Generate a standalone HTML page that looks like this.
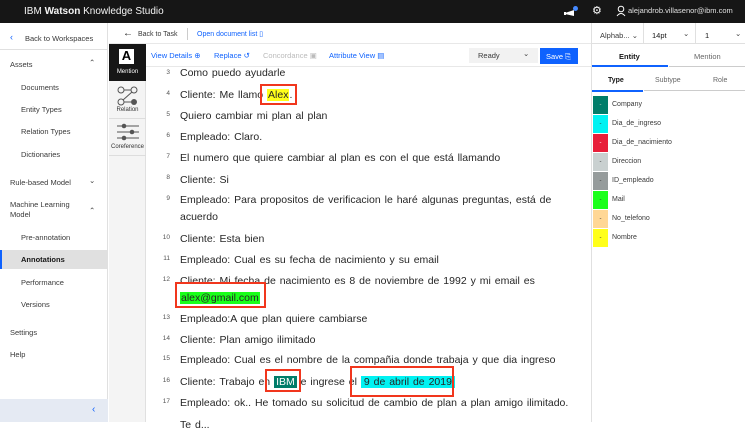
<!DOCTYPE html>
<html><head><meta charset="utf-8"><style>
*{margin:0;padding:0;box-sizing:border-box}
body{width:745px;height:422px;overflow:hidden;position:relative;background:#fff;font-family:"Liberation Sans",sans-serif;color:#161616}
.a{position:absolute;white-space:nowrap}
.top{left:0;top:0;width:745px;height:23px;background:#161616}
.side{left:0;top:23px;width:108px;height:399px;background:#fff;border-right:1px solid #e0e0e0}
.s{font-size:7.5px;color:#393939}
.ln{font-size:6.5px;color:#555;width:14px;text-align:right}
.tx{font-size:10.5px;color:#262626;letter-spacing:0;word-spacing:1px}
.box{border:2px solid #f1361d}
.ent{left:593px;width:15px;height:18px;color:#333;font-size:6px;text-align:center;line-height:18px}
.en{left:612px;font-size:7px;color:#393939}
.lk{font-size:7.5px;color:#0f62fe}
</style></head><body>
<div class="a top"></div>
<div class="a" style="left:24px;top:6px;color:#f4f4f4;font-size:10px">IBM <b>Watson</b> Knowledge Studio</div>
<svg class="a" style="left:563px;top:5px" width="16" height="14"><path d="M2 8 L11 5 L11 11 L2 9Z" fill="#fff"/><rect x="1" y="7" width="2" height="3" fill="#fff"/><circle cx="12.5" cy="3.5" r="2.5" fill="#4589ff"/></svg>
<div class="a" style="left:592px;top:4px;color:#fff;font-size:11px">⚙</div>
<svg class="a" style="left:616px;top:5px" width="10" height="12"><circle cx="5" cy="4" r="2.8" fill="none" stroke="#fff"/><path d="M1 11 Q5 6 9 11" fill="none" stroke="#fff"/></svg>
<div class="a" style="left:628px;top:6px;color:#e0e0e0;font-size:7.5px">alejandrob.villasenor@ibm.com</div>

<div class="a side"></div>
<div class="a" style="left:0;top:23px;width:108px;height:27px;border-bottom:1px solid #e0e0e0"></div>
<div class="a" style="left:10px;top:32px;color:#0f62fe;font-size:9px">‹</div>
<div class="a s" style="left:25px;top:34px">Back to Workspaces</div>
<div class="a s" style="left:10px;top:60px">Assets</div>
<div class="a s" style="left:89px;top:58px">⌃</div>
<div class="a s" style="left:21px;top:83px">Documents</div>
<div class="a s" style="left:21px;top:105px">Entity Types</div>
<div class="a s" style="left:21px;top:127px">Relation Types</div>
<div class="a s" style="left:21px;top:150px">Dictionaries</div>
<div class="a s" style="left:10px;top:178px">Rule-based Model</div>
<div class="a s" style="left:89px;top:176px">⌄</div>
<div class="a s" style="left:10px;top:200px;line-height:10px;white-space:normal;width:70px">Machine Learning Model</div>
<div class="a s" style="left:89px;top:206px">⌃</div>
<div class="a s" style="left:21px;top:233px">Pre-annotation</div>
<div class="a" style="left:0;top:250px;width:108px;height:19px;background:#e0e0e0;border-left:2px solid #0f62fe"></div>
<div class="a s" style="left:21px;top:255px;font-weight:bold;color:#161616">Annotations</div>
<div class="a s" style="left:21px;top:278px">Performance</div>
<div class="a s" style="left:21px;top:300px">Versions</div>
<div class="a s" style="left:10px;top:328px">Settings</div>
<div class="a s" style="left:10px;top:350px">Help</div>
<div class="a" style="left:0;top:399px;width:108px;height:23px;background:#e5eaf3"></div>
<div class="a" style="left:92px;top:404px;color:#0f62fe;font-size:10px">‹</div>

<div class="a" style="left:109px;top:43px;width:482px;height:1px;background:#e8e8e8"></div>
<div class="a" style="left:123px;top:28px;font-size:10px">←</div>
<div class="a s" style="left:138px;top:31px;font-size:7px">Back to Task</div>
<div class="a" style="left:187px;top:28px;width:1px;height:12px;background:#ccc"></div>
<div class="a lk" style="left:197px;top:30px;font-size:7px">Open document list ▯</div>

<div class="a" style="left:109px;top:44px;width:37px;height:378px;background:#f4f4f4;border-right:1px solid #e0e0e0"></div>
<div class="a" style="left:109px;top:44px;width:37px;height:37px;background:#161616"></div>
<div class="a" style="left:119px;top:49px;width:15px;height:15px;background:#fff;color:#000;font-weight:bold;font-size:13px;text-align:center;line-height:14px">A</div>
<div class="a" style="left:109px;top:69px;width:37px;text-align:center;color:#fff;font-size:6px">Mention</div>
<svg class="a" style="left:117px;top:86px" width="22" height="20"><circle cx="4" cy="4" r="3" fill="none" stroke="#555"/><circle cx="17" cy="4" r="3" fill="none" stroke="#555"/><circle cx="4" cy="16" r="3" fill="none" stroke="#555"/><circle cx="17" cy="16" r="3" fill="#555"/><path d="M7 4H14M15 6L6 14M7 16H14" stroke="#555"/></svg>
<div class="a" style="left:109px;top:107px;width:37px;text-align:center;color:#333;font-size:6px">Relation</div>
<div class="a" style="left:109px;top:118px;width:37px;height:1px;background:#ddd"></div>
<svg class="a" style="left:116px;top:123px" width="24" height="18"><path d="M1 3H23M1 9H23M1 15H23" stroke="#555"/><circle cx="8" cy="3" r="2.3" fill="#555"/><circle cx="16" cy="9" r="2.3" fill="#555"/><circle cx="8" cy="15" r="2.3" fill="#555"/></svg>
<div class="a" style="left:109px;top:144px;width:37px;text-align:center;color:#333;font-size:6px">Coreference</div>
<div class="a" style="left:109px;top:155px;width:37px;height:1px;background:#ddd"></div>

<div class="a lk" style="left:151px;top:51px">View Details ⊕</div>
<div class="a lk" style="left:214px;top:51px">Replace ↺</div>
<div class="a" style="left:263px;top:51px;font-size:7.5px;color:#bbb">Concordance ▣</div>
<div class="a lk" style="left:329px;top:51px">Attribute View ▤</div>
<div class="a" style="left:469px;top:48px;width:69px;height:15px;background:#f2f2f2"></div>
<div class="a s" style="left:478px;top:51px">Ready</div>
<div class="a s" style="left:523px;top:49px">⌄</div>
<div class="a" style="left:540px;top:48px;width:38px;height:16px;background:#0f62fe;color:#fff;font-size:7.5px;padding:4px 0 0 6px">Save ⎘</div>
<div class="a" style="left:146px;top:66px;width:445px;height:1px;background:#e8e8e8"></div>

<div class="a ln" style="left:156px;top:69px">3</div><div class="a tx" style="left:180px;top:67px">Como puedo ayudarle</div>
<div class="a ln" style="left:156px;top:90px">4</div><div class="a tx" style="left:180px;top:89px">Cliente: Me llamo <span style="background:#ffff1a;padding:0 1px">Alex</span>.</div>
<div class="a box" style="left:260px;top:84px;width:37px;height:21px"></div>
<div class="a ln" style="left:156px;top:111px">5</div><div class="a tx" style="left:180px;top:110px">Quiero cambiar mi plan al plan</div>
<div class="a ln" style="left:156px;top:132px">6</div><div class="a tx" style="left:180px;top:131px">Empleado: Claro.</div>
<div class="a ln" style="left:156px;top:153px">7</div><div class="a tx" style="left:180px;top:152px">El numero que quiere cambiar al plan es con el que está llamando</div>
<div class="a ln" style="left:156px;top:174px">8</div><div class="a tx" style="left:180px;top:174px">Cliente: Si</div>
<div class="a ln" style="left:156px;top:195px">9</div><div class="a tx" style="left:180px;top:194px">Empleado: Para propositos de verificacion le haré algunas preguntas, está de</div>
<div class="a tx" style="left:180px;top:211px">acuerdo</div>
<div class="a ln" style="left:156px;top:234px">10</div><div class="a tx" style="left:180px;top:233px">Cliente: Esta bien</div>
<div class="a ln" style="left:156px;top:255px">11</div><div class="a tx" style="left:180px;top:254px">Empleado: Cual es su fecha de nacimiento y su email</div>
<div class="a ln" style="left:156px;top:276px">12</div><div class="a tx" style="left:180px;top:275px">Cliente: Mi fecha de nacimiento es 8 de noviembre de 1992 y mi email es</div>
<div class="a tx" style="left:180px;top:292px"><span style="background:#1aff1a;padding:0 1px">alex@gmail.com</span></div>
<div class="a box" style="left:175px;top:282px;width:91px;height:26px"></div>
<div class="a ln" style="left:156px;top:314px">13</div><div class="a tx" style="left:180px;top:313px">Empleado:A que plan quiere cambiarse</div>
<div class="a ln" style="left:156px;top:335px">14</div><div class="a tx" style="left:180px;top:334px">Cliente: Plan amigo ilimitado</div>
<div class="a ln" style="left:156px;top:355px">15</div><div class="a tx" style="left:180px;top:354px">Empleado: Cual es el nombre de la compañia donde trabaja y que dia ingreso</div>
<div class="a ln" style="left:156px;top:377px">16</div><div class="a tx" style="left:180px;top:376px">Cliente: Trabajo en <span style="background:#007d6a;color:#fff;padding:0 2px">IBM</span> e ingrese el <span style="background:#00f2f2;padding:0 3px">9 de abril de 2019</span></div>
<div class="a box" style="left:265px;top:369px;width:36px;height:23px"></div>
<div class="a box" style="left:350px;top:366px;width:104px;height:31px"></div>
<div class="a ln" style="left:156px;top:398px">17</div><div class="a tx" style="left:180px;top:397px">Empleado: ok.. He tomado su solicitud de cambio de plan a plan amigo ilimitado.</div>
<div class="a tx" style="left:180px;top:419px">Te d...</div>

<div class="a" style="left:591px;top:23px;width:154px;height:399px;background:#fff;border-left:1px solid #e0e0e0"></div>
<div class="a" style="left:591px;top:43px;width:154px;height:1px;background:#e0e0e0"></div>
<div class="a" style="left:643px;top:23px;width:1px;height:20px;background:#e0e0e0"></div>
<div class="a" style="left:695px;top:23px;width:1px;height:20px;background:#e0e0e0"></div>
<div class="a s" style="left:600px;top:31px">Alphab... ⌄</div>
<div class="a s" style="left:652px;top:31px;color:#161616">14pt</div><div class="a s" style="left:683px;top:29px">⌄</div>
<div class="a s" style="left:705px;top:31px;color:#161616">1</div><div class="a s" style="left:735px;top:29px">⌄</div>
<div class="a" style="left:619px;top:52px;font-size:7.5px;font-weight:bold">Entity</div>
<div class="a s" style="left:694px;top:52px;color:#666">Mention</div>
<div class="a" style="left:592px;top:65px;width:76px;height:2px;background:#0f62fe"></div>
<div class="a" style="left:669px;top:66px;width:76px;height:1px;background:#ccc"></div>
<div class="a" style="left:608px;top:77px;font-size:7px;font-weight:bold">Type</div>
<div class="a s" style="left:655px;top:77px;color:#666;font-size:7px">Subtype</div>
<div class="a s" style="left:713px;top:77px;color:#666;font-size:7px">Role</div>
<div class="a" style="left:592px;top:90px;width:51px;height:2px;background:#0f62fe"></div>
<div class="a" style="left:644px;top:90px;width:101px;height:1px;background:#ccc"></div>
<div class="a ent" style="top:96px;background:#007d6a;color:#ccc">-</div><div class="a en" style="top:101px">Company</div>
<div class="a ent" style="top:115px;background:#00f2f2">-</div><div class="a en" style="top:120px">Dia_de_ingreso</div>
<div class="a ent" style="top:134px;background:#e81f3a;color:#fff">-</div><div class="a en" style="top:139px">Dia_de_nacimiento</div>
<div class="a ent" style="top:153px;background:#c9d0d0">-</div><div class="a en" style="top:158px">Direccion</div>
<div class="a ent" style="top:172px;background:#959b9b">-</div><div class="a en" style="top:177px">ID_empleado</div>
<div class="a ent" style="top:191px;background:#1aff1a">-</div><div class="a en" style="top:196px">Mail</div>
<div class="a ent" style="top:210px;background:#ffd795">-</div><div class="a en" style="top:215px">No_telefono</div>
<div class="a ent" style="top:229px;background:#ffff1a">-</div><div class="a en" style="top:234px">Nombre</div>
</body></html>
